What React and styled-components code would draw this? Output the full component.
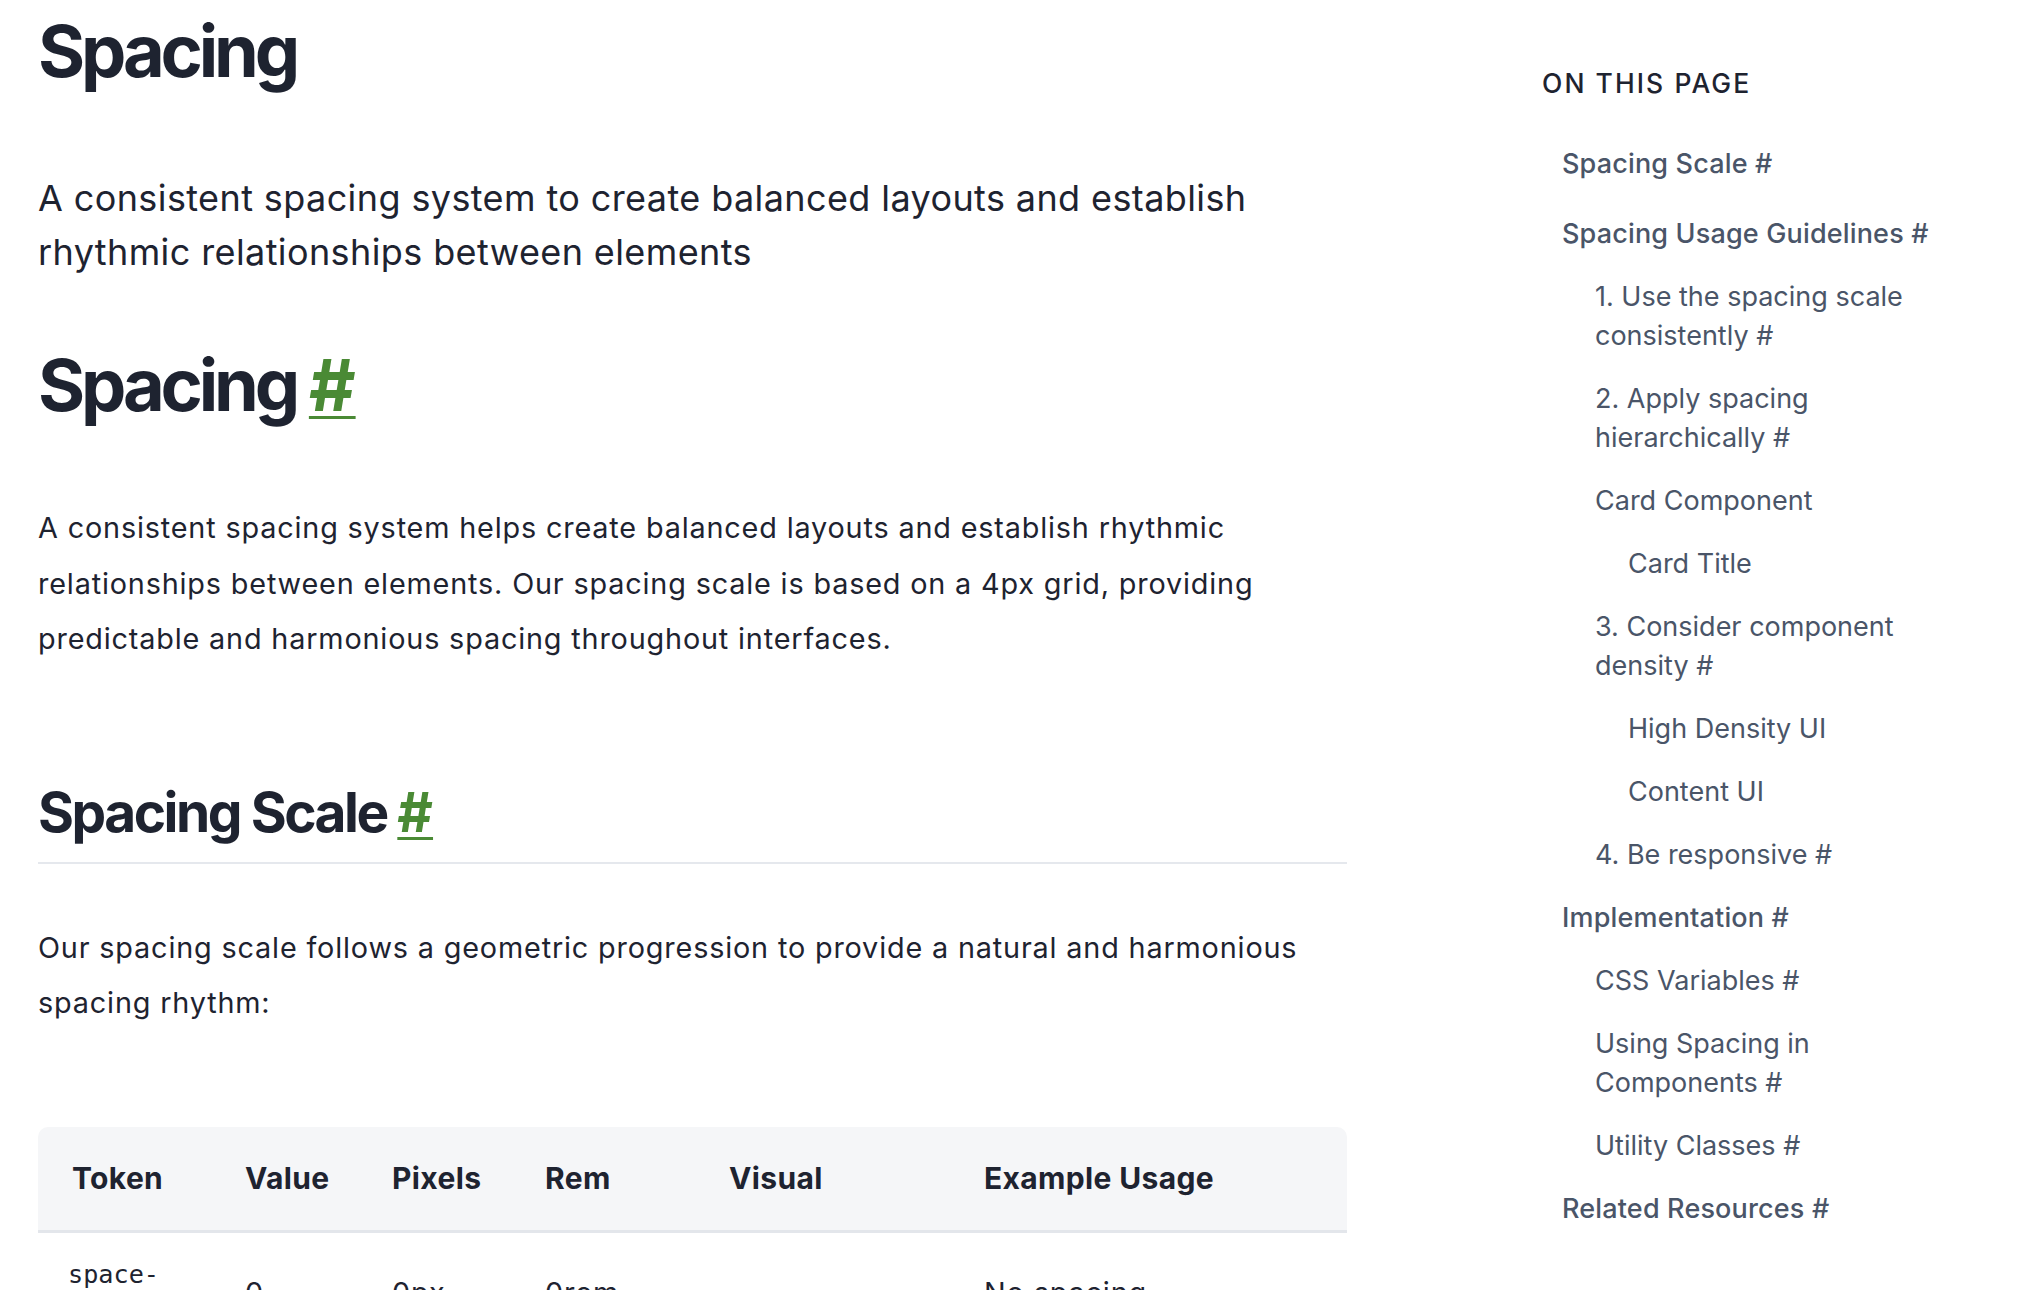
import React from "react";
import styled, { createGlobalStyle } from "styled-components";

const GlobalStyle = createGlobalStyle`
  html { scrollbar-width: none; }
  html::-webkit-scrollbar { display: none; }
  body {
    margin: 0;
    background: #ffffff;
    color: #1e2330;
    font-family: Inter, "Noto Sans", "Liberation Sans", sans-serif;
    -webkit-font-smoothing: antialiased;
  }
  * { box-sizing: border-box; }
`;

const Page = styled.div`
  display: grid;
  grid-template-columns: 1309px 400px;
  column-gap: 195px;
  padding: 8px 0 0 38px;
  align-items: start;
`;

const Article = styled.article`
  display: flex;
  flex-direction: column;
  min-width: 0;
`;

const Title = styled.h1`
  margin: 0;
  font-size: 72px;
  line-height: 86px;
  font-weight: 700;
  letter-spacing: -0.058em;
  color: #1e2330;
`;

const Lead = styled.p`
  margin: 77px 0 0;
  font-size: 36px;
  line-height: 54px;
  font-weight: 400;
  letter-spacing: 0.011em;
  color: #1e2330;
`;

const SectionTitle = styled.h2`
  margin: ${(p) => p.$top}px 0 0;
  font-size: ${(p) => p.$size}px;
  line-height: 1.2;
  font-weight: 700;
  letter-spacing: ${(p) => p.$track}em;
  color: #1e2330;
  padding-bottom: ${(p) => (p.$rule ? 17 : 0)}px;
  border-bottom: ${(p) => (p.$rule ? "2px solid #e5e8ed" : "none")};
`;

const Anchor = styled.a`
  color: #4a8a35;
  letter-spacing: 0;
  text-decoration: underline;
  text-decoration-thickness: ${(p) => p.$thick}px;
  text-underline-offset: 5px;
`;

const Body = styled.p`
  margin: ${(p) => p.$top}px 0 0;
  font-size: 28.8px;
  line-height: 55.5px;
  font-weight: 400;
  letter-spacing: 0.029em;
  color: #1e2330;
`;

const TableWrap = styled.div`
  margin-top: 96px;
  border-radius: 10px 10px 0 0;
  overflow: hidden;
`;

const Table = styled.table`
  width: 100%;
  table-layout: fixed;
  border-collapse: collapse;
`;

const HeadRow = styled.tr`
  background: #f5f6f8;
  border-bottom: 3px solid #e3e6eb;
`;

const Th = styled.th`
  text-align: left;
  padding: 24px 32px 24px 34px;
  font-size: 30px;
  line-height: 55px;
  font-weight: 700;
  letter-spacing: 0.012em;
  color: #1e2330;
`;

const Td = styled.td`
  padding: ${(p) => (p.$token ? "24px 44px 24px 30px" : "24px 32px 24px 34px")};
  font-size: 28.8px;
  line-height: 55px;
  letter-spacing: 0.03em;
  vertical-align: middle;
  color: #1e2330;
  border-bottom: 1px solid #e5e8ed;
`;

const Code = styled.code`
  display: block;
  font-family: "DejaVu Sans Mono", "Liberation Mono", monospace;
  font-size: 25.2px;
  line-height: 36px;
  letter-spacing: 0;
  word-break: break-all;
  color: #1e2330;
`;

const Bar = styled.div`
  height: 24px;
  background: #4a8a35;
  border-radius: 3px;
`;

const Side = styled.nav`
  padding-top: 56px;
`;

const SideHeading = styled.h4`
  margin: 0;
  font-size: 26.5px;
  line-height: 38px;
  font-weight: 500;
  letter-spacing: 0.078em;
  text-transform: uppercase;
  color: #1e2330;
`;

const TocList = styled.ul`
  list-style: none;
  margin: ${(p) => (p.$root ? "42px 0 0" : p.$flush ? "0" : "24px 0 0")};
  padding: 0 0 0 ${(p) => (p.$root ? 20 : 33)}px;
  display: flex;
  flex-direction: column;
  gap: 24px;
`;

const TocItem = styled.li`
  margin: 0 0 ${(p) => (p.$extra ? 7 : 0)}px;
`;

const TocLink = styled.a`
  display: block;
  font-size: 27px;
  line-height: 39px;
  font-weight: ${(p) => (p.$strong ? 500 : 400)};
  letter-spacing: ${(p) => (p.$strong ? "0.006em" : "0")};
  color: #4a5568;
  text-decoration: none;
`;

const rows = [
  ["space-0", "0", "0px", "0rem", 0, "No spacing"],
  ["space-1", "1", "4px", "0.25rem", 4, "Tight spacing between related elements"],
  ["space-2", "2", "8px", "0.5rem", 8, "Default spacing for compact components"],
  ["space-3", "3", "12px", "0.75rem", 12, "Spacing between form elements"],
  ["space-4", "4", "16px", "1rem", 16, "Default padding for components"],
  ["space-5", "5", "20px", "1.25rem", 20, "Spacing between cards"],
  ["space-6", "6", "24px", "1.5rem", 24, "Section padding"],
  ["space-8", "8", "32px", "2rem", 32, "Spacing between sections"],
];

const toc = [
  { label: "Spacing Scale #", extra: true },
  {
    label: "Spacing Usage Guidelines #",
    children: [
      { label: "1. Use the spacing scale consistently #" },
      { label: "2. Apply spacing hierarchically #" },
      { label: "Card Component", children: [{ label: "Card Title" }] },
      { label: "3. Consider component density #" },
      { label: "High Density UI", nested: true },
      { label: "Content UI", nested: true },
      { label: "4. Be responsive #" },
    ],
  },
  {
    label: "Implementation #",
    children: [
      { label: "CSS Variables #" },
      { label: "Using Spacing in Components #" },
      { label: "Utility Classes #" },
    ],
  },
  { label: "Related Resources #" },
];

function TocTree({ items, root }) {
  const out = [];
  let i = 0;
  while (i < items.length) {
    const it = items[i];
    if (it.nested) {
      const group = [];
      while (i < items.length && items[i].nested) {
        group.push(items[i]);
        i++;
      }
      out.push(
        <TocItem key={"g" + i}>
          <TocList $flush>
            {group.map((g) => (
              <TocItem key={g.label}>
                <TocLink href="#">{g.label}</TocLink>
              </TocItem>
            ))}
          </TocList>
        </TocItem>
      );
      continue;
    }
    out.push(
      <TocItem key={it.label} $extra={it.extra}>
        <TocLink href="#" $strong={root}>
          {it.label}
        </TocLink>
        {it.children && <TocTree items={it.children} />}
      </TocItem>
    );
    i++;
  }
  return <TocList $root={root}>{out}</TocList>;
}

export default function App() {
  return (
    <>
      <GlobalStyle />
      <Page>
        <Article>
          <Title>Spacing</Title>
          <Lead>
            A consistent spacing system to create balanced layouts and establish
            rhythmic relationships between elements
          </Lead>
          <SectionTitle $size={72} $top={63} $track={-0.058}>
            Spacing <Anchor href="#" $thick={3}>#</Anchor>
          </SectionTitle>
          <Body $top={72}>
            A consistent spacing system helps create balanced layouts and establish
            rhythmic relationships between elements. Our spacing scale is based on a
            4px grid, providing predictable and harmonious spacing throughout
            interfaces.
          </Body>
          <SectionTitle $size={55} $top={112} $track={-0.045} $rule>
            Spacing Scale <Anchor href="#" $thick={2.5}>#</Anchor>
          </SectionTitle>
          <Body $top={56}>
            Our spacing scale follows a geometric progression to provide a natural and
            harmonious spacing rhythm:
          </Body>
          <TableWrap>
            <Table>
              <colgroup>
                <col style={{ width: 173 }} />
                <col style={{ width: 147 }} />
                <col style={{ width: 153 }} />
                <col style={{ width: 184 }} />
                <col style={{ width: 255 }} />
                <col />
              </colgroup>
              <thead>
                <HeadRow>
                  <Th>Token</Th>
                  <Th>Value</Th>
                  <Th>Pixels</Th>
                  <Th>Rem</Th>
                  <Th>Visual</Th>
                  <Th>Example Usage</Th>
                </HeadRow>
              </thead>
              <tbody>
                {rows.map((r) => (
                  <tr key={r[0]}>
                    <Td $token>
                      <Code>{r[0]}</Code>
                    </Td>
                    <Td>{r[1]}</Td>
                    <Td>{r[2]}</Td>
                    <Td>{r[3]}</Td>
                    <Td>
                      <Bar style={{ width: r[4] * 1.8 }} />
                    </Td>
                    <Td>{r[5]}</Td>
                  </tr>
                ))}
              </tbody>
            </Table>
          </TableWrap>
        </Article>
        <Side>
          <SideHeading>On this page</SideHeading>
          <TocTree items={toc} root />
        </Side>
      </Page>
    </>
  );
}
